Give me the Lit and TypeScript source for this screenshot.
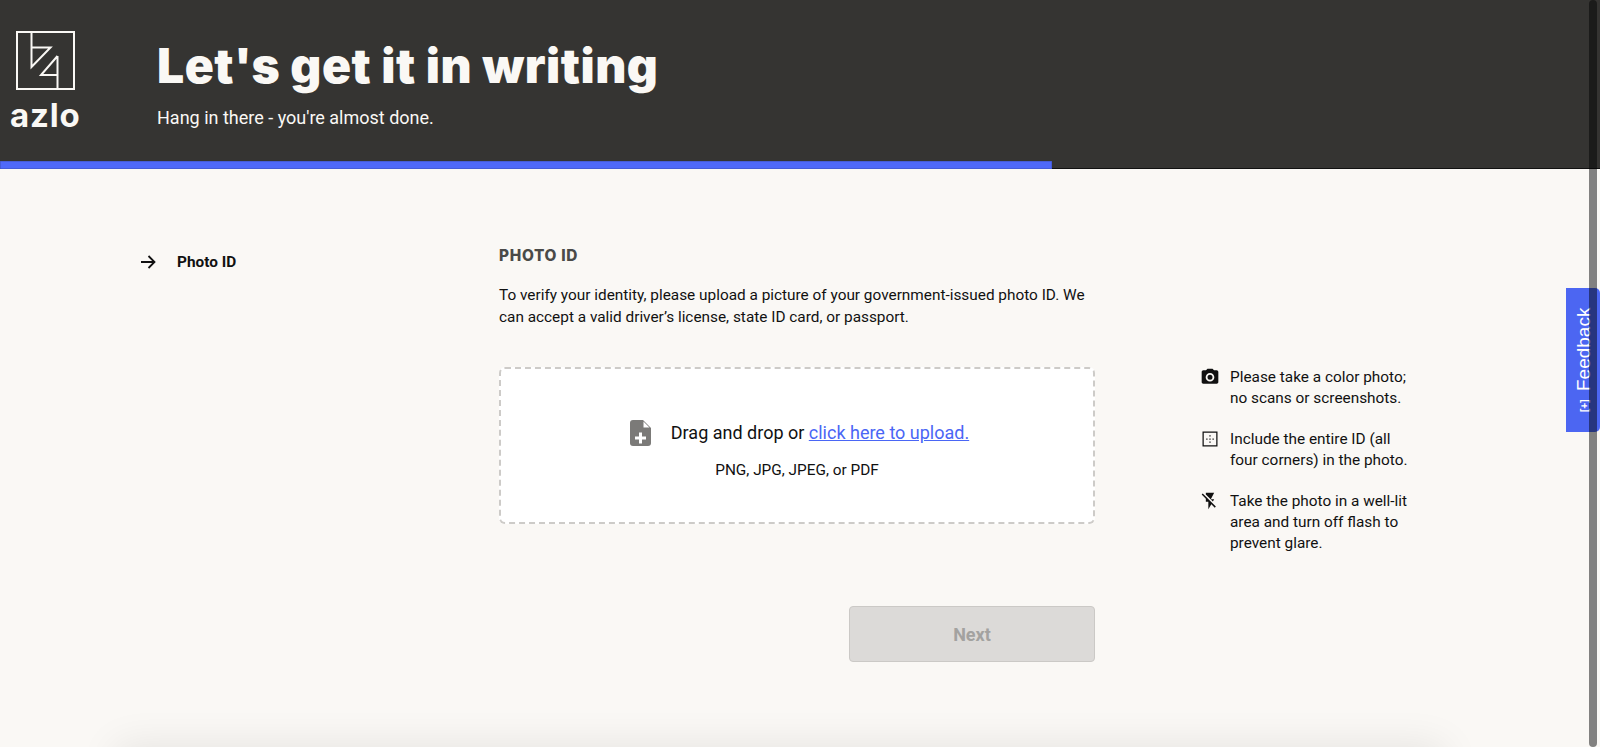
import { LitElement, html, css, svg } from "lit";
import { customElement } from "lit/decorators.js";

const hints = [
  {
    icon: svg`<path d="M9 2 7.17 4H4c-1.1 0-2 .9-2 2v12c0 1.1.9 2 2 2h16c1.1 0 2-.9 2-2V6c0-1.1-.9-2-2-2h-3.170L15 2H9zm3 15.500a5.200 5.200 0 1 1 0-10.400 5.200 5.200 0 0 1 0 10.400zm0-2.200a3 3 0 1 0 0-6 3 3 0 0 0 0 6z"/>`,
    lines: ["Please take a color photo;", "no scans or screenshots."],
  },
  {
    icon: svg`<path d="M3 3v18h18V3H3zm16.500 16.500h-15v-15h15v15zM11.250 7.500h1.500V9h-1.500zM7.500 11.250H9v1.500H7.500zm3.750 0h1.500v1.500h-1.500zm3.750 0h1.500v1.500H15zM11.250 15h1.500v1.500h-1.500z"/>`,
    lines: ["Include the entire ID (all", "four corners) in the photo."],
  },
  {
    icon: svg`<path d="M3.270 3 2 4.270l5 5V13h3v9l3.580-6.140L17.730 20 19 18.730 3.270 3zM17 10h-4l4-8H7v2.180l8.460 8.460L17 10z"/>`,
    lines: ["Take the photo in a well-lit", "area and turn off flash to", "prevent glare."],
  },
];

@customElement("app-root")
export class AppRoot extends LitElement {
  static styles = css`
    :host {
      display: block;
      position: relative;
      height: 747px;
      overflow: hidden;
      background: #faf8f5;
      font-family: Roboto, "Liberation Sans", sans-serif;
      color: #111;
    }
    .header {
      height: 169px;
      box-sizing: border-box;
      background: #353432;
      border-bottom: 1px solid #111;
      position: relative;
      display: flex;
    }
    .progress {
      position: absolute;
      left: 0;
      bottom: -1px;
      width: 1052px;
      height: 8px;
      background: #4f69f9;
      box-shadow: inset 0 0 0 0.5px #3f50b8;
    }
    .brand {
      width: 157px;
      display: flex;
      flex-direction: column;
      align-items: flex-start;
      padding: 31px 0 0 16px;
      box-sizing: border-box;
    }
    .brand svg {
      display: block;
      width: 59px;
      height: 59px;
    }
    .azlo {
      margin: 8px 0 0 -6px;
      font-family: Inter, sans-serif;
      font-weight: 700;
      font-size: 33px;
      line-height: 34px;
      letter-spacing: 0.8px;
      color: #faf8f5;
    }
    .titles {
      padding-top: 36px;
      color: #faf8f5;
    }
    h1 {
      margin: 0;
      font-family: Inter, "Liberation Sans", sans-serif;
      font-weight: 900;
      font-size: 48px;
      line-height: 60px;
      letter-spacing: 0.5px;
    }
    .sub {
      margin-top: 11px;
      font-size: 18px;
      line-height: 22px;
    }
    .body {
      display: flex;
      padding-top: 78px;
    }
    .nav {
      width: 499px;
      box-sizing: border-box;
      padding: 4px 0 0 140px;
      display: flex;
      align-items: flex-start;
      gap: 21px;
      font-size: 15.36px;
      font-weight: 700;
      line-height: 22px;
    }
    .nav svg {
      width: 16px;
      height: 22px;
      flex: none;
    }
    .main {
      width: 596px;
      display: flex;
      flex-direction: column;
    }
    h2 {
      margin: 0;
      font-family: Inter, "Liberation Sans", sans-serif;
      font-weight: 800;
      font-size: 15.36px;
      line-height: 18px;
      letter-spacing: 0.7px;
      color: #4a4a48;
    }
    .intro {
      margin: 19px 0 0;
      font-size: 15.36px;
      line-height: 22px;
    }
    .drop {
      margin-top: 39px;
      height: 157px;
      box-sizing: border-box;
      border: 2px dashed #cdcbc8;
      border-radius: 6px;
      background: #fff;
      display: flex;
      flex-direction: column;
      align-items: center;
      padding-top: 50px;
    }
    .line {
      display: flex;
      align-items: center;
      gap: 20px;
      padding-left: 5px;
      font-size: 18px;
      line-height: 28px;
    }
    .line svg {
      width: 21px;
      height: 26px;
      flex: none;
    }
    .line a {
      color: #4a66f5;
      text-decoration: underline;
    }
    .types {
      margin-top: 13px;
      font-size: 15.36px;
      line-height: 20px;
    }
    .actions {
      margin-top: 82px;
      display: flex;
      justify-content: flex-end;
    }
    .next {
      width: 246px;
      height: 56px;
      box-sizing: border-box;
      border: 1px solid #cbc9c6;
      border-radius: 4px;
      background: #dcdad8;
      color: #a3a2a0;
      font-family: Roboto, sans-serif;
      font-weight: 700;
      font-size: 18px;
    }
    .hints {
      margin: 120px 0 0 105px;
      display: flex;
      flex-direction: column;
      gap: 20px;
    }
    .hint {
      display: flex;
      gap: 10px;
      font-size: 15.36px;
      line-height: 21px;
    }
    .hint svg {
      width: 20px;
      height: 20px;
      flex: none;
      fill: #111;
    }
    .footer {
      position: absolute;
      left: 130px;
      top: 760px;
      width: 1300px;
      height: 60px;
      box-shadow: 0 0 40px 14px rgba(0, 0, 0, 0.09);
    }
    .feedback {
      position: absolute;
      right: 0;
      top: 288px;
      width: 34px;
      height: 144px;
      box-sizing: border-box;
      background: #4c66f2;
      border-radius: 5px 0 0 5px;
      color: #fff;
      display: flex;
      align-items: center;
      justify-content: center;
      gap: 8px;
      writing-mode: vertical-rl;
      transform: rotate(180deg);
      font-family: "Liberation Sans", sans-serif;
      font-size: 19px;
      padding-right: 2px;
    }
    .feedback small {
      font-size: 10px;
      font-weight: 700;
    }
    .scroll {
      position: absolute;
      left: 1589px;
      top: 0;
      bottom: 0;
      width: 8px;
      border-radius: 4px;
      background: rgba(0, 0, 0, 0.48);
    }
  `;

  render() {
    return html`
      <div class="header">
        <div class="brand">
          <svg viewBox="0 0 59 59" fill="none" stroke="#faf8f5" stroke-width="2">
            <rect x="1" y="1" width="57" height="57" />
            <path d="M15.500 1V36L34.500 16.500H15.500" />
            <path d="M41.500 25 25 44H41.500M41.500 25V58" />
          </svg>
          <div class="azlo">azlo</div>
        </div>
        <div class="titles">
          <h1>Let's get it in writing</h1>
          <div class="sub">Hang in there - you're almost done.</div>
        </div>
        <div class="progress"></div>
      </div>
      <div class="body">
        <div class="nav">
          <svg viewBox="0 0 16 22" fill="none" stroke="#111" stroke-width="1.800">
            <path d="M1 11H14.500M8.500 5l6 6-6 6" />
          </svg>
          <span>Photo ID</span>
        </div>
        <div class="main">
          <h2>PHOTO ID</h2>
          <p class="intro">
            To verify your identity, please upload a picture of your government-issued photo ID. We<br />can
            accept a valid driver’s license, state ID card, or passport.
          </p>
          <div class="drop">
            <div class="line">
              <svg viewBox="0 0 21 26">
                <path fill="#7b7a78" d="M3 0H13L21 8V23a3 3 0 0 1-3 3H3a3 3 0 0 1-3-3V3a3 3 0 0 1 3-3z" />
                <path fill="#fff" d="M13.500 1.500 19.500 7.500H13.500zM9 12.500h3v4h4v3h-4v4H9v-4H5v-3h4z" />
              </svg>
              <span>Drag and drop or <a href="#">click here to upload.</a></span>
            </div>
            <div class="types">PNG, JPG, JPEG, or PDF</div>
          </div>
          <div class="actions"><button class="next" disabled>Next</button></div>
        </div>
        <div class="hints">
          ${hints.map(
            (h) => html`<div class="hint">
              <svg viewBox="0 0 24 24">${h.icon}</svg>
              <div>${h.lines.map((l) => html`${l}<br />`)}</div>
            </div>`
          )}
        </div>
      </div>
      <div class="footer"></div>
      <div class="feedback"><small>[+]</small><span>Feedback</span></div>
      <div class="scroll"></div>
    `;
  }
}
